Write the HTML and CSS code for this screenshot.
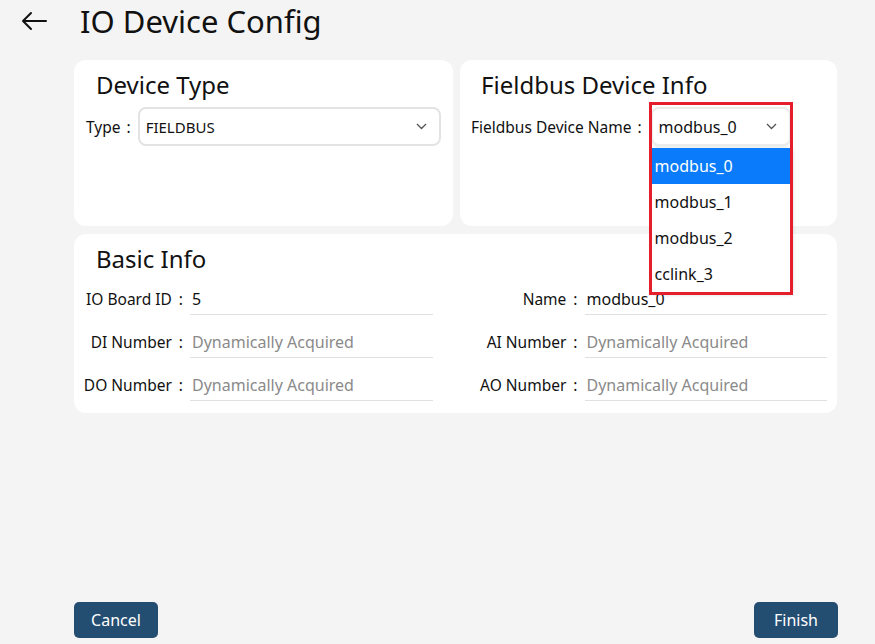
FILE: index.html
```html
<!DOCTYPE html>
<html lang="en">
<head>
  <meta charset="UTF-8">
  <title>IO Device Config</title>
  <meta name="viewport" content="width=device-width,initial-scale=1.0">
  <link rel="stylesheet" href="styles.css">
</head>
<body>
  <div id="page">
    <header id="page-header">
      <button type="button" class="back-btn" aria-label="Back">
        <svg width="26" height="20" viewBox="0 0 26 20"><path d="M25 10H2M10 2L2 10l8 8" fill="none" stroke="#111" stroke-width="2" stroke-linecap="round" stroke-linejoin="round"/></svg>
      </button>
      <h1 id="page-title">IO Device Config</h1>
    </header>

    <main id="content">
      <div class="top-row">
        <section class="card">
          <h2>Device Type</h2>
          <div class="field-row">
            <label>Type<span class="colon">:</span></label>
            <div class="select wide">
              <span>FIELDBUS</span>
              <svg class="chev" width="11" height="7" viewBox="0 0 11 7"><path d="M1 1l4.5 4.5L10 1" fill="none" stroke="#555" stroke-width="1.3"/></svg>
            </div>
          </div>
        </section>

        <section class="card">
          <h2>Fieldbus Device Info</h2>
          <div class="field-row">
            <label>Fieldbus Device Name<span class="colon">:</span></label>
            <div class="select-wrap">
              <div class="select small">
                <span>modbus_0</span>
                <svg class="chev" width="11" height="7" viewBox="0 0 11 7"><path d="M1 1l4.5 4.5L10 1" fill="none" stroke="#555" stroke-width="1.3"/></svg>
              </div>
              <ul class="dropdown">
                <li class="selected">modbus_0</li>
                <li>modbus_1</li>
                <li>modbus_2</li>
                <li>cclink_3</li>
              </ul>
              <div class="highlight-box"></div>
            </div>
          </div>
        </section>
      </div>

      <section class="card basic">
        <h2>Basic Info</h2>
        <div class="info-grid">
          <label>IO Board ID<span class="colon">:</span></label>
          <div class="line-input">5</div>
          <label>Name<span class="colon">:</span></label>
          <div class="line-input">modbus_0</div>

          <label>DI Number<span class="colon">:</span></label>
          <div class="line-input muted">Dynamically Acquired</div>
          <label>AI Number<span class="colon">:</span></label>
          <div class="line-input muted">Dynamically Acquired</div>

          <label>DO Number<span class="colon">:</span></label>
          <div class="line-input muted">Dynamically Acquired</div>
          <label>AO Number<span class="colon">:</span></label>
          <div class="line-input muted">Dynamically Acquired</div>
        </div>
      </section>
    </main>

    <footer id="actions">
      <button type="button" class="btn">Cancel</button>
      <button type="button" class="btn">Finish</button>
    </footer>
  </div>
</body>
</html>
```

FILE: styles.css
```css
html, body {margin:0; padding:0; height:100%; background:#f4f4f4; color:#111; font-family:"Noto Sans","Noto Sans CJK SC",sans-serif;}
#page {display:flex; flex-direction:column; height:100vh;}
#page-header {display:flex; align-items:center; height:42px; padding-left:21px;}
.back-btn {background:none; border:none; padding:0; margin:0 0 1px 0; width:26px; height:20px; display:flex; cursor:pointer;}
#page-title {margin:0 0 0 33px; font-size:31px; font-weight:400; line-height:42px;}
#content {padding:18px 38px 0 74px;}
.top-row {display:grid; grid-template-columns:379px 1fr; gap:7px; margin-bottom:8px;}
.card {background:#fff; border-radius:12px; padding:10px 12px 0 12px; box-sizing:border-box;}
.top-row .card {height:166px;}
.top-row .card + .card {padding-left:11px;}
.card h2 {margin:0 0 7px 10px; font-size:24px; font-weight:400; line-height:30px;}
.colon {margin-left:6px;}
.field-row {display:flex; align-items:center; font-size:15.5px;}
.field-row label {margin-right:7px; white-space:nowrap;}
.select {display:flex; align-items:center; justify-content:space-between; height:39px; box-sizing:border-box; border:2px solid #e3e3e3; border-radius:8px; padding:0 12px 0 6px; font-size:15px; background:#fff;}
.select.wide {flex:1;}
.select.small {width:140px; font-size:16px; border-color:#ececec; box-shadow:0 1px 2px rgba(0,0,0,0.08);}
.field-row .select-wrap {margin-left:2px; position:relative;}
.dropdown {position:absolute; left:1px; top:41px; width:139px; margin:0; padding:0; list-style:none; background:#fff; box-shadow:1px 2px 4px rgba(0,0,0,0.25); z-index:5; font-size:16px;}
.dropdown li {height:36px; line-height:36px; padding-left:3px;}
.dropdown li.selected {background:#0a7cfb; color:#fff;}
.highlight-box {position:absolute; left:-2px; top:-5px; width:144px; height:193px; border:3px solid #e41e2b; box-sizing:border-box; z-index:6; pointer-events:none;}
.card.basic {height:179px; padding:10px 10px 0 0;}
.card.basic h2 {margin:0 0 10px 22px;}
.info-grid {display:grid; grid-template-columns:116px 1fr 152px 1fr; row-gap:12px; font-size:15.5px;}
.info-grid label {text-align:right; line-height:31px; white-space:nowrap; padding-right:7px;}
.info-grid .colon {margin-left:7px;}
.line-input {height:30px; line-height:31px; border-bottom:1px solid #e0e0e0; padding-left:2px; font-size:16px;}
.line-input.muted {color:#8a8a8a;}
#actions {margin-top:auto; display:flex; justify-content:space-between; padding:0 37px 6px 74px;}
.btn {width:84px; height:36px; border:none; border-radius:5px; background:#234e72; color:#fff; font-family:inherit; font-size:16px; cursor:pointer;}
```
